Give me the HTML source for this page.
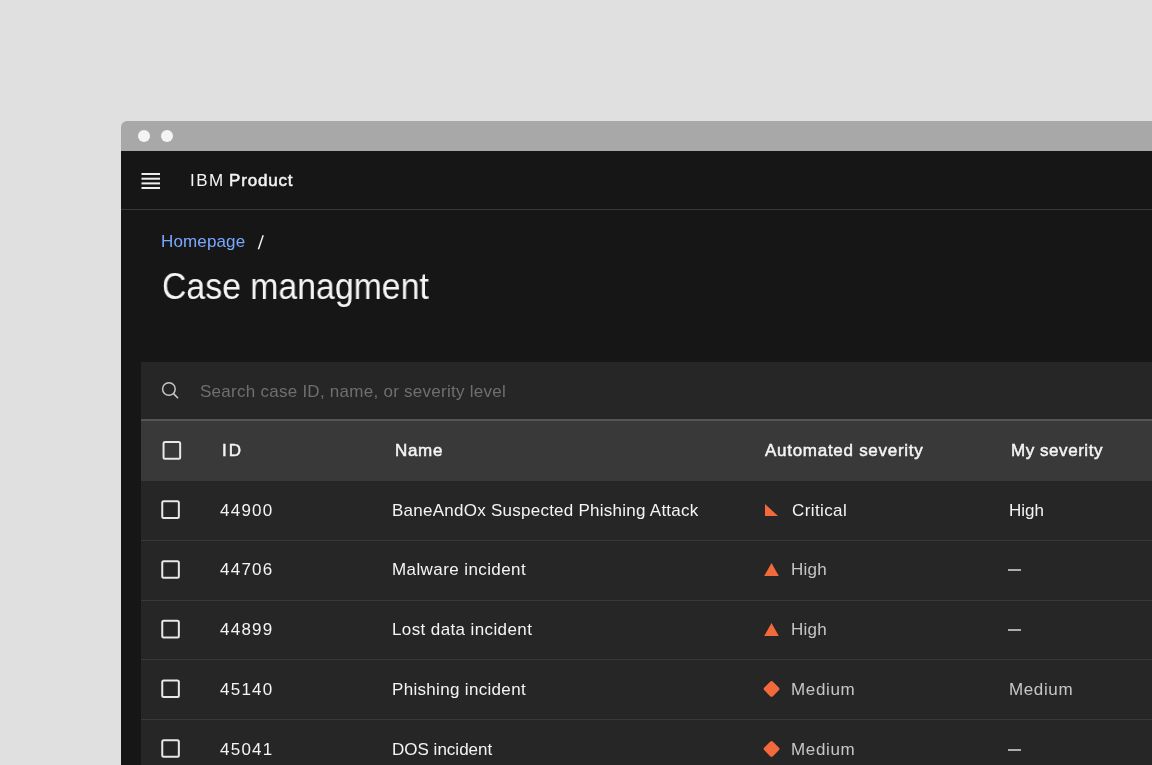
<!DOCTYPE html>
<html><head><meta charset="utf-8">
<style>
*{margin:0;padding:0;box-sizing:border-box}
html,body{width:1152px;height:765px;overflow:hidden;background:#e0e0e0;font-family:"Liberation Sans",sans-serif;position:relative}
.abs{position:absolute}
.t{position:absolute;white-space:nowrap;will-change:transform}
.cb{position:absolute;width:18px;height:18px;border:2px solid #e8e8e8;border-radius:2.5px}
.ham{position:absolute;left:141.5px;width:18.5px;height:2px;background:#f4f4f4}
.dot{position:absolute;top:130px;width:12px;height:12px;border-radius:50%;background:#f4f4f4}
</style></head>
<body>
<div class="abs" style="left:121px;top:121px;width:1100px;height:30px;background:#a8a8a8;border-radius:6px 6px 0 0"></div>
<div class="abs" style="left:121px;top:151px;width:1031px;height:614px;background:#161616"></div>
<div class="dot" style="left:138px"></div>
<div class="dot" style="left:160.5px"></div>
<div class="abs" style="left:121px;top:209px;width:1031px;height:1px;background:#393939"></div>
<svg class="abs" style="left:250px;top:230px" width="20" height="24" viewBox="0 0 20 24"><line x1="8.4" y1="19.3" x2="13.2" y2="5.2" stroke="#f4f4f4" stroke-width="1.45"/></svg>
<svg class="abs" style="left:140px;top:170px" width="24" height="22" viewBox="0 0 24 22">
<rect x="1.5" y="3" width="18.5" height="2" fill="#ededed"/>
<rect x="1.5" y="7.7" width="18.5" height="2" fill="#ededed"/>
<rect x="1.5" y="12.4" width="18.5" height="2" fill="#ededed"/>
<rect x="1.5" y="17" width="18.5" height="2" fill="#ededed"/>
</svg>
<div class="abs" style="left:141px;top:362px;width:1011px;height:403px;background:#262626"></div>
<div class="abs" style="left:141px;top:419px;width:1011px;height:2px;background:#555"></div>
<div class="abs" style="left:141px;top:421px;width:1011px;height:60px;background:#393939"></div>
<svg class="abs" style="left:160px;top:380px" width="22" height="22" viewBox="0 0 22 22">
  <circle cx="8.9" cy="9" r="6.3" fill="none" stroke="#c6c6c6" stroke-width="1.5"/>
  <line x1="13.5" y1="13.6" x2="18" y2="18.3" stroke="#c6c6c6" stroke-width="1.6"/>
</svg>
<svg class="abs" style="left:162px;top:441px" width="22" height="22" viewBox="0 0 22 22"><rect x="1.55" y="1.05" width="16.6" height="16.6" rx="1.5" fill="none" stroke="#e8e8e8" stroke-width="2"/></svg>
<div class="t" style="left:190.00px;top:171.06px;font-size:17px;line-height:20px;height:20px;color:#f4f4f4;font-weight:400;letter-spacing:1.500px;transform-origin:0 0;transform:scaleX(1)">IBM</div>
<div class="t" style="left:229.20px;top:170.61px;font-size:17px;line-height:20px;height:20px;color:#f4f4f4;font-weight:400;-webkit-text-stroke:0.5px #f4f4f4;letter-spacing:0.833px;transform-origin:0 0;transform:scaleX(1)">Product</div>
<div class="t" style="left:160.60px;top:231.71px;font-size:17px;line-height:20px;height:20px;color:#78a9ff;font-weight:400;letter-spacing:0.143px;transform-origin:0 0;transform:scaleX(1)">Homepage</div>
<div class="t" style="left:161.50px;top:265.15px;font-size:36.5px;line-height:44px;height:44px;color:#f4f4f4;font-weight:400;letter-spacing:0.000px;transform-origin:0 0;transform:scaleX(0.926)">Case managment</div>
<div class="t" style="left:199.60px;top:382.01px;font-size:17px;line-height:20px;height:20px;color:#6f6f6f;font-weight:400;letter-spacing:0.263px;transform-origin:0 0;transform:scaleX(1)">Search case ID, name, or severity level</div>
<div class="t" style="left:222.00px;top:440.95px;font-size:17px;line-height:20px;height:20px;color:#f4f4f4;font-weight:400;-webkit-text-stroke:0.5px #f4f4f4;letter-spacing:2.000px;transform-origin:0 0;transform:scaleX(1)">ID</div>
<div class="t" style="left:394.80px;top:440.95px;font-size:17px;line-height:20px;height:20px;color:#f4f4f4;font-weight:400;-webkit-text-stroke:0.5px #f4f4f4;letter-spacing:0.667px;transform-origin:0 0;transform:scaleX(1)">Name</div>
<div class="t" style="left:765.20px;top:440.95px;font-size:17px;line-height:20px;height:20px;color:#f4f4f4;font-weight:400;-webkit-text-stroke:0.5px #f4f4f4;letter-spacing:0.721px;transform-origin:0 0;transform:scaleX(1)">Automated severity</div>
<div class="t" style="left:1010.60px;top:440.95px;font-size:17px;line-height:20px;height:20px;color:#f4f4f4;font-weight:400;-webkit-text-stroke:0.5px #f4f4f4;letter-spacing:0.550px;transform-origin:0 0;transform:scaleX(1)">My severity</div>
<div class="t" style="left:219.60px;top:500.60px;font-size:17px;line-height:20px;height:20px;color:#f4f4f4;font-weight:400;letter-spacing:1.250px;transform-origin:0 0;transform:scaleX(1)">44900</div>
<div class="t" style="left:392.40px;top:500.60px;font-size:17px;line-height:20px;height:20px;color:#f4f4f4;font-weight:400;letter-spacing:0.253px;transform-origin:0 0;transform:scaleX(1)">BaneAndOx Suspected Phishing Attack</div>
<div class="t" style="left:792.20px;top:500.60px;font-size:17px;line-height:20px;height:20px;color:#f4f4f4;font-weight:400;letter-spacing:0.400px;transform-origin:0 0;transform:scaleX(1)">Critical</div>
<div class="t" style="left:1008.60px;top:500.60px;font-size:17px;line-height:20px;height:20px;color:#f4f4f4;font-weight:400;letter-spacing:-0.033px;transform-origin:0 0;transform:scaleX(1)">High</div>
<div class="t" style="left:219.60px;top:559.60px;font-size:17px;line-height:20px;height:20px;color:#f4f4f4;font-weight:400;letter-spacing:1.250px;transform-origin:0 0;transform:scaleX(1)">44706</div>
<div class="t" style="left:392.40px;top:559.60px;font-size:17px;line-height:20px;height:20px;color:#f4f4f4;font-weight:400;letter-spacing:0.407px;transform-origin:0 0;transform:scaleX(1)">Malware incident</div>
<div class="t" style="left:791.00px;top:559.60px;font-size:17px;line-height:20px;height:20px;color:#c6c6c6;font-weight:400;letter-spacing:0.233px;transform-origin:0 0;transform:scaleX(1)">High</div>
<div class="t" style="left:219.60px;top:619.60px;font-size:17px;line-height:20px;height:20px;color:#f4f4f4;font-weight:400;letter-spacing:1.250px;transform-origin:0 0;transform:scaleX(1)">44899</div>
<div class="t" style="left:392.40px;top:619.60px;font-size:17px;line-height:20px;height:20px;color:#f4f4f4;font-weight:400;letter-spacing:0.388px;transform-origin:0 0;transform:scaleX(1)">Lost data incident</div>
<div class="t" style="left:791.00px;top:619.60px;font-size:17px;line-height:20px;height:20px;color:#c6c6c6;font-weight:400;letter-spacing:0.233px;transform-origin:0 0;transform:scaleX(1)">High</div>
<div class="t" style="left:219.60px;top:679.60px;font-size:17px;line-height:20px;height:20px;color:#f4f4f4;font-weight:400;letter-spacing:1.250px;transform-origin:0 0;transform:scaleX(1)">45140</div>
<div class="t" style="left:392.40px;top:679.60px;font-size:17px;line-height:20px;height:20px;color:#f4f4f4;font-weight:400;letter-spacing:0.319px;transform-origin:0 0;transform:scaleX(1)">Phishing incident</div>
<div class="t" style="left:791.00px;top:679.60px;font-size:17px;line-height:20px;height:20px;color:#c6c6c6;font-weight:400;letter-spacing:0.660px;transform-origin:0 0;transform:scaleX(1)">Medium</div>
<div class="t" style="left:1008.60px;top:679.60px;font-size:17px;line-height:20px;height:20px;color:#c6c6c6;font-weight:400;letter-spacing:0.620px;transform-origin:0 0;transform:scaleX(1)">Medium</div>
<div class="t" style="left:219.60px;top:739.60px;font-size:17px;line-height:20px;height:20px;color:#f4f4f4;font-weight:400;letter-spacing:1.250px;transform-origin:0 0;transform:scaleX(1)">45041</div>
<div class="t" style="left:392.40px;top:739.60px;font-size:17px;line-height:20px;height:20px;color:#f4f4f4;font-weight:400;letter-spacing:0.009px;transform-origin:0 0;transform:scaleX(1)">DOS incident</div>
<div class="t" style="left:791.00px;top:739.60px;font-size:17px;line-height:20px;height:20px;color:#c6c6c6;font-weight:400;letter-spacing:0.660px;transform-origin:0 0;transform:scaleX(1)">Medium</div>
<div class="abs" style="left:141px;top:540px;width:1011px;height:1px;background:#393939"></div>
<svg class="abs" style="left:161px;top:500px" width="22" height="22" viewBox="0 0 22 22"><rect x="1.25" y="1.35" width="16.6" height="16.6" rx="1.5" fill="none" stroke="#e8e8e8" stroke-width="2"/></svg>
<svg class="abs" style="left:764px;top:501px" width="16" height="16" viewBox="0 0 16 16"><path d="M1 3 L1 15 L14 15 Z" fill="#f26a3c"/></svg>
<div class="abs" style="left:141px;top:600px;width:1011px;height:1px;background:#393939"></div>
<svg class="abs" style="left:161px;top:560px" width="22" height="22" viewBox="0 0 22 22"><rect x="1.25" y="1.20" width="16.6" height="16.6" rx="1.5" fill="none" stroke="#e8e8e8" stroke-width="2"/></svg>
<svg class="abs" style="left:764px;top:561px" width="16" height="16" viewBox="0 0 16 16"><path d="M7.5 1.9 L14.8 14.9 L0.2 14.9 Z" fill="#f26a3c"/></svg>
<div class="abs" style="left:1008px;top:568.7px;width:13.2px;height:2.3px;background:#adadad"></div>
<div class="abs" style="left:141px;top:659px;width:1011px;height:1px;background:#393939"></div>
<svg class="abs" style="left:161px;top:619px" width="22" height="22" viewBox="0 0 22 22"><rect x="1.25" y="1.80" width="16.6" height="16.6" rx="1.5" fill="none" stroke="#e8e8e8" stroke-width="2"/></svg>
<svg class="abs" style="left:764px;top:621px" width="16" height="16" viewBox="0 0 16 16"><path d="M7.5 1.9 L14.8 14.9 L0.2 14.9 Z" fill="#f26a3c"/></svg>
<div class="abs" style="left:1008px;top:628.7px;width:13.2px;height:2.3px;background:#adadad"></div>
<div class="abs" style="left:141px;top:719px;width:1011px;height:1px;background:#393939"></div>
<svg class="abs" style="left:161px;top:679px" width="22" height="22" viewBox="0 0 22 22"><rect x="1.25" y="1.40" width="16.6" height="16.6" rx="1.5" fill="none" stroke="#e8e8e8" stroke-width="2"/></svg>
<svg class="abs" style="left:762.5px;top:680px" width="18" height="18" viewBox="0 0 18 18"><rect x="2.45" y="2.85" width="12.2" height="12.2" rx="2" transform="rotate(45 8.55 8.95)" fill="#f26a3c"/></svg>
<div class="abs" style="left:141px;top:779px;width:1011px;height:1px;background:#393939"></div>
<svg class="abs" style="left:161px;top:739px" width="22" height="22" viewBox="0 0 22 22"><rect x="1.25" y="1.20" width="16.6" height="16.6" rx="1.5" fill="none" stroke="#e8e8e8" stroke-width="2"/></svg>
<svg class="abs" style="left:762.5px;top:740px" width="18" height="18" viewBox="0 0 18 18"><rect x="2.45" y="2.85" width="12.2" height="12.2" rx="2" transform="rotate(45 8.55 8.95)" fill="#f26a3c"/></svg>
<div class="abs" style="left:1008px;top:748.7px;width:13.2px;height:2.3px;background:#adadad"></div>
</body></html>
